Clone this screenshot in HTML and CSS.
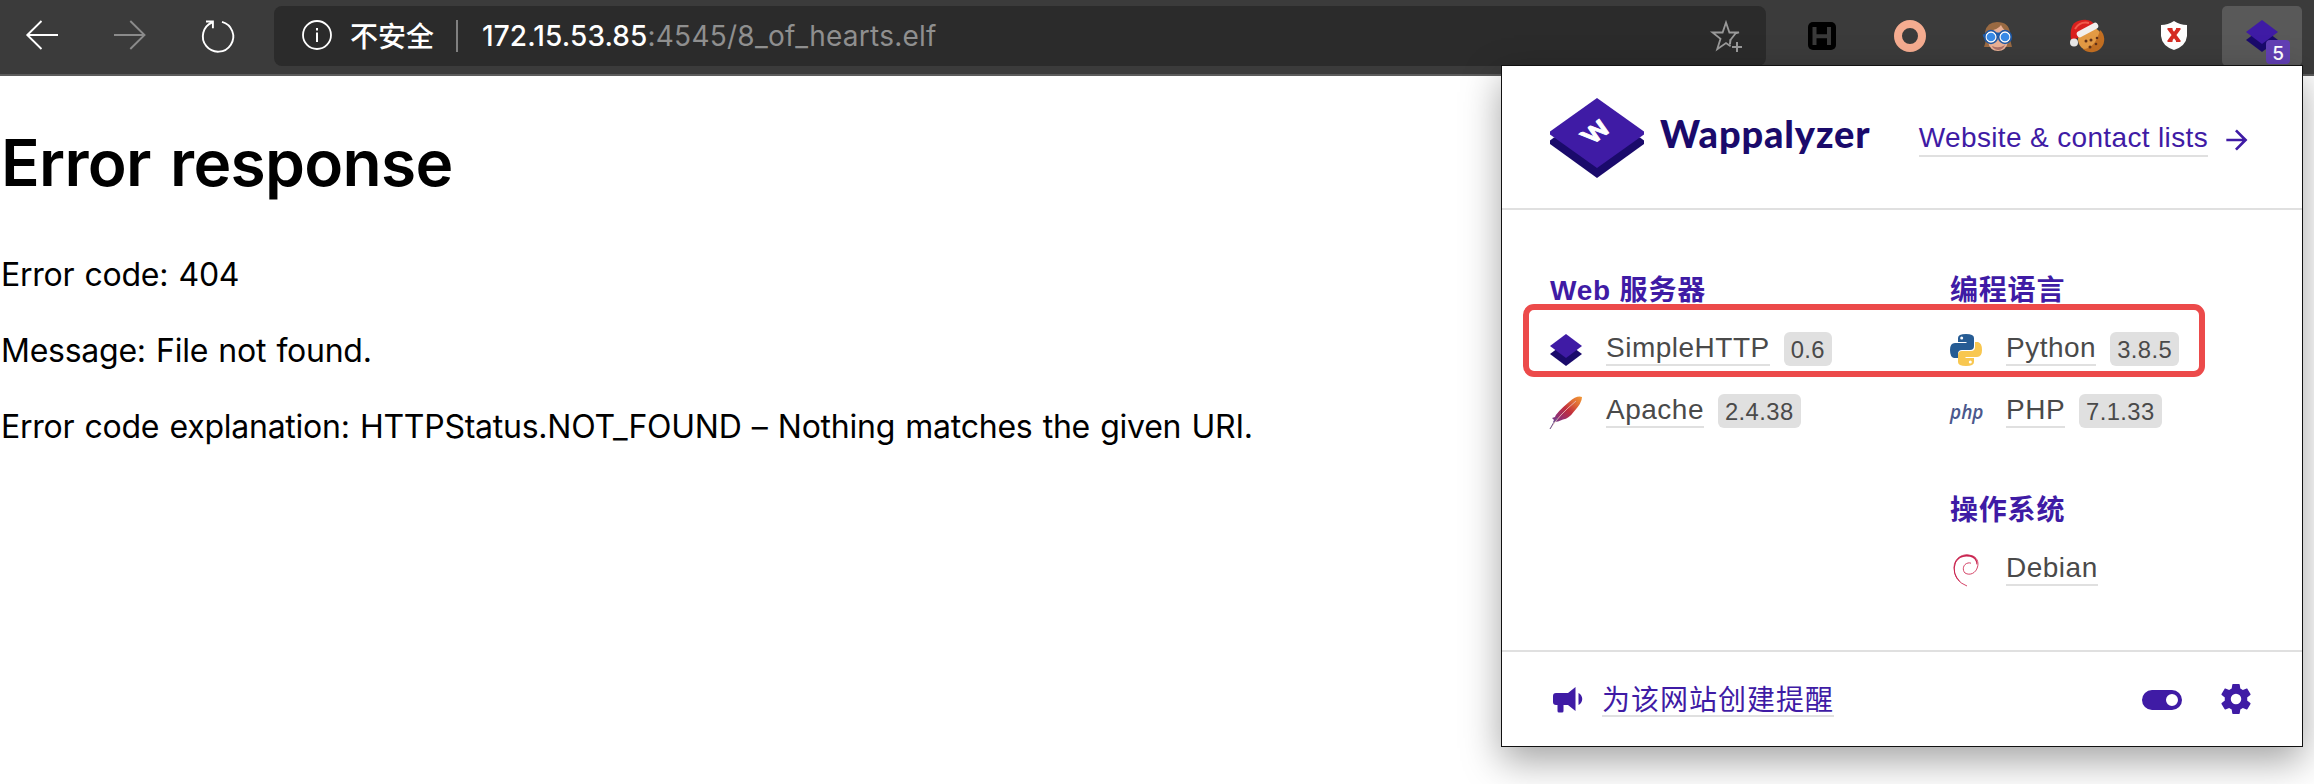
FILE: index.html
```html
<!DOCTYPE html>
<html lang="zh-CN">
<head>
<meta charset="utf-8">
<title>Error response</title>
<link rel="stylesheet" href="styles.css">
</head>
<body>
<header class="toolbar">
  <nav class="nav">
    <svg class="icon" viewBox="0 0 32 32"><path d="M32 15H1.5M15.5 1L1.3 15l14.2 14" fill="none" stroke="#fff" stroke-width="1.9"/></svg>
    <svg class="icon" viewBox="0 0 32 32"><path d="M0 15h30.500M16.300 1l14.200 14-14.200 14" fill="none" stroke="#8b8b8b" stroke-width="1.900"/></svg>
    <svg class="icon" viewBox="0 0 32 32"><path d="M20 1.800A15.200 15.200 0 1 1 10.300 2.400M4 1.500h6.900v6.800" fill="none" stroke="#fff" stroke-width="1.900"/></svg>
  </nav>
  <div class="address">
    <svg class="info" viewBox="0 0 30 30"><circle cx="15" cy="15" r="14" fill="none" stroke="#fff" stroke-width="1.800"/><path d="M15 12.500V22M15 8v2.500" stroke="#fff" stroke-width="2"/></svg>
    <span class="insecure">不安全</span>
    <span class="divider"></span>
    <span class="url"><span class="host">172.15.53.85</span><span class="path">:4545/8_of_hearts.elf</span></span>
    <svg class="star" viewBox="0 0 32 32"><path d="M20 20.500L25.500 13.500 29 12.500H19.400L16 2.500 12.600 12.500H2.500L10.500 18.800 7.200 29.200 16 23l4.600 3.200" fill="none" stroke="#999" stroke-width="1.800"/><path d="M20.500 19.500l-.6 5M22 27h10M27 22v10" stroke="#999" stroke-width="2"/></svg>
  </div>
  <div class="extensions">
    <svg class="icon" viewBox="0 0 32 32"><rect x="2" y="2" width="28" height="28" rx="5"/><path d="M8.500 7v18M23 7v18M8.500 16.300H23" stroke="#3a3a3a" stroke-width="4"/></svg>
    <svg class="icon" viewBox="0 0 32 32"><circle cx="16" cy="16" r="12" fill="none" stroke="#f5ac90" stroke-width="8"/></svg>
    <svg class="icon" viewBox="0 0 32 32">
      <path d="M3 12Q5 2 15 2q12 0 13 11 0 8 2 14H2Q5 20 3 12" fill="#9a6a42"/>
      <path d="M6 11q10-1 13-6 2 5 7 7v10q-2 9-10 9T6 22z" fill="#eab095"/>
      <path d="M10 26q7 3 13-1-2 5-7 5-5-1-6-4" fill="#ad7168"/>
      <path d="M1 16q15-4 28 0" stroke="#1e5dac" stroke-width="3" fill="none"/>
      <g fill="#398ae6" stroke="#fff" stroke-width="1.300"><circle cx="9" cy="17" r="5"/><circle cx="23" cy="17" r="5"/></g>
      <g fill="none" stroke="#1d59a8" stroke-width="1.500"><circle cx="9" cy="17" r="6.400"/><circle cx="23" cy="17" r="6.400"/></g>
    </svg>
    <svg class="icon" viewBox="0 0 32 32">
      <circle cx="20" cy="19" r="12" fill="#e39a44"/><path d="M30 10a12 12 0 0 1-17 19q12 0 17-19" fill="#c36f22"/>
      <g fill="#61321b"><circle cx="16" cy="21" r="1.500"/><circle cx="21" cy="20" r="1.500"/><circle cx="27" cy="18" r="1.300"/><circle cx="20" cy="27" r="1.500"/><circle cx="26" cy="24" r="1.300"/></g>
      <path d="M1 20Q-1 4 8 1q13-4 17 5l-16 11-7 4z" fill="#d9201e"/><path d="M5 9Q10 1 19 3" stroke="#f15a4c" stroke-width="2" fill="none"/>
      <path d="M10 14l15-8" stroke="#f2efed" stroke-width="6.500" stroke-linecap="round"/><circle cx="4" cy="22.500" r="4" fill="#e8e8e8"/>
    </svg>
    <svg class="icon" viewBox="0 0 32 32"><path d="M16 1q6 4 13 4v11q-1 10-13 14Q4 26 3 16V5q7 0 13-4" fill="#fff"/><path d="M11.500 9l9 12M20.500 9l-9 12" stroke="#d52b22" stroke-width="3.800"/><path d="M9.500 9h5M18 9h4.500M9.500 21h5M18 21h4.500" stroke="#d52b22" stroke-width="2"/></svg>
    <div class="ext-active">
      <svg class="icon" viewBox="0 0 32 32"><path d="M0 20l16-12 16 12-16 12z" fill="#1a0a6b"/><path d="M0 12L16 0l16 12-16 12z" fill="#3f1ba5"/></svg>
      <span class="count">5</span>
    </div>
  </div>
</header>

<main class="page">
  <h1>Error response</h1>
  <p>Error code: 404</p>
  <p>Message: File not found.</p>
  <p>Error code explanation: HTTPStatus.NOT_FOUND – Nothing matches the given URI.</p>
</main>

<aside class="popup">
  <div class="popup-head">
    <svg class="logo" viewBox="0 0 94 80"><path d="M0 42.500L4 39.500h86l4 3v3.500L47 80 0 46z" fill="#1a0a6b"/><path d="M0 33.500L47 0l47 33.500v3L47 70 0 36.500z" fill="#3f1ba5"/><text class="logo-w" transform="matrix(.8 -.6 .8 .6 46 34)" y="8.500" text-anchor="middle" fill="#fff" stroke="#fff" stroke-width="1">W</text></svg>
    <span class="brand">Wappalyzer</span>
    <a class="lists">Website &amp; contact lists</a>
    <svg class="arrow" viewBox="0 0 24 24"><path d="M4,11V13H16L10.500,18.500L11.920,19.920L19.840,12L11.920,4.080L10.500,5.500L16,11H4Z"/></svg>
  </div>
  <div class="popup-body">
    <section class="col">
      <h2>Web 服务器</h2>
      <div class="tech"><svg class="icon" viewBox="0 0 32 32"><path d="M0 20l16-12 16 12-16 12z" fill="#1a0a6b"/><path d="M0 12L16 0l16 12-16 12z" fill="#3f1ba5"/></svg><a>SimpleHTTP</a><span class="ver">0.6</span></div>
      <div class="tech"><svg class="icon" viewBox="0 0 32 32">
        <defs><linearGradient id="feather" x1="1" y1="0" x2="0" y2="1"><stop offset="0" stop-color="#f39a35"/><stop offset=".25" stop-color="#df6b36"/><stop offset=".5" stop-color="#c22f3c"/><stop offset=".75" stop-color="#9a2f6b"/><stop offset="1" stop-color="#6b3a8f"/></linearGradient></defs>
        <path d="M32 1q-5-2-13 5Q6 17 5 21l-3 1 2 2-1 2 5-.5 5-2q6-1 11-8Q32 7 32 1z" fill="url(#feather)"/><path d="M0 33Q9 19 26 5" fill="none" stroke="#e9b8b4" stroke-width=".9"/><path d="M0 33q3-6 7-11" fill="none" stroke="#6f5a90" stroke-width="1"/></svg><a>Apache</a><span class="ver">2.4.38</span></div>
    </section>
    <section class="col">
      <h2>编程语言</h2>
      <div class="tech"><svg class="icon" viewBox="0 0 32 32"><path d="M16 0q-8 0-8 4v4h8.500v1H5Q0 9 0 16t4 8h4v-4q0-4 4-4h8q4 0 4-4V4q0-4-8-4z" fill="#265c94"/><circle cx="11.700" cy="4" r="1.500" fill="#fff"/><path d="M16 32q8 0 8-4v-4h-8.500v-1H27q5 0 5-7t-4-8h-3v5q0 4-4 4h-9q-4 0-4 4v7q0 4 8 4z" fill="#f8c750"/><circle cx="20.300" cy="28" r="1.500" fill="#fff"/></svg><a>Python</a><span class="ver">3.8.5</span></div>
      <div class="tech"><span class="php">php</span><a>PHP</a><span class="ver">7.1.33</span></div>
      <h2 class="second">操作系统</h2>
      <div class="tech"><svg class="icon" viewBox="0 0 32 32"><path d="M17 32Q4 27 4 14C4 3 14-1 21 1.500c6 1 8 7 6.500 11.500C26 19 20 22 15 19c-3-3-2-9 3-10q1-.4 3 .2" fill="none" stroke="#d54568" stroke-width="1"/><path d="M13 30Q3 24 3.800 13 5 2 16 .8q9-.5 11 6.200l.4 3-1 .5Q26 4 20 2.800 10 1 6 8.500 2 19 10.500 28z" fill="#c8234f"/></svg><a>Debian</a></div>
    </section>
  </div>
  <div class="popup-foot">
    <svg class="mdi" viewBox="0 0 24 24"><path d="M12,8H4A2,2 0 0,0 2,10V14A2,2 0 0,0 4,16H5V20A1,1 0 0,0 6,21H8A1,1 0 0,0 9,20V16H12L17,20V4L12,8M21.500,12C21.500,13.710 20.540,15.260 19,16V8C20.530,8.750 21.500,10.300 21.500,12Z"/></svg>
    <a class="alert">为该网站创建提醒</a>
    <svg class="mdi toggle" viewBox="0 0 24 24"><path d="M17,7H7A5,5 0 0,0 2,12A5,5 0 0,0 7,17H17A5,5 0 0,0 22,12A5,5 0 0,0 17,7M17,15A3,3 0 0,1 14,12A3,3 0 0,1 17,9A3,3 0 0,1 20,12A3,3 0 0,1 17,15Z"/></svg>
    <svg class="mdi cog" viewBox="0 0 24 24"><path d="M12,15.500A3.500,3.500 0 0,1 8.500,12A3.500,3.500 0 0,1 12,8.500A3.500,3.500 0 0,1 15.500,12A3.500,3.500 0 0,1 12,15.500M19.430,12.970C19.470,12.650 19.500,12.330 19.500,12C19.500,11.670 19.470,11.340 19.430,11L21.540,9.370C21.730,9.220 21.780,8.950 21.660,8.730L19.660,5.270C19.540,5.050 19.270,4.960 19.050,5.050L16.560,6.050C16.040,5.660 15.500,5.320 14.870,5.070L14.500,2.420C14.460,2.180 14.250,2 14,2H10C9.750,2 9.540,2.180 9.500,2.420L9.130,5.070C8.500,5.320 7.960,5.660 7.440,6.050L4.950,5.050C4.730,4.960 4.460,5.050 4.340,5.270L2.340,8.730C2.210,8.950 2.270,9.220 2.460,9.370L4.570,11C4.530,11.340 4.500,11.670 4.500,12C4.500,12.330 4.530,12.650 4.570,12.970L2.460,14.630C2.270,14.780 2.210,15.050 2.340,15.270L4.340,18.730C4.460,18.950 4.730,19.030 4.950,18.950L7.440,17.940C7.960,18.340 8.500,18.680 9.130,18.930L9.500,21.580C9.540,21.820 9.750,22 10,22H14C14.250,22 14.460,21.820 14.500,21.580L14.870,18.930C15.500,18.670 16.040,18.340 16.560,17.940L19.050,18.950C19.270,19.030 19.540,18.950 19.660,18.730L21.660,15.270C21.780,15.050 21.730,14.780 21.540,14.630L19.430,12.970Z"/></svg>
  </div>
  <div class="highlight"></div>
</aside>
</body>
</html>
```
FILE: styles.css
```css
* { box-sizing: border-box; }
body {
  margin: 0;
  height: 784px;
  overflow: hidden;
  position: relative;
  background: #fff;
  color: #000;
  font-family: "Liberation Sans", "Noto Sans CJK SC", sans-serif;
}
svg { display: block; flex: none; overflow: visible; }
.icon { width: 32px; height: 32px; }

.toolbar {
  display: flex;
  align-items: flex-start;
  height: 76px;
  padding: 6px 0 0 26px;
  background: #3b3b3b;
  border-bottom: 2px solid #5c5c5c;
}
.nav { display: flex; gap: 56px; padding-top: 14px; }
.address {
  display: flex;
  align-items: center;
  width: 1492px;
  height: 60px;
  margin-left: 40px;
  padding: 0 24px 0 28px;
  border-radius: 8px;
  background: #2b2b2b;
  font-family: Inter, "Noto Sans CJK SC", sans-serif;
  font-size: 28px;
}
.info { width: 30px; height: 30px; margin-top: -2px; }
.insecure { margin: -2px 0 0 18px; width: 84px; color: #fff; font-weight: 500; font-family: "Noto Sans CJK SC", sans-serif; line-height: 40px; }
.divider { width: 2px; height: 32px; margin-left: 22px; background: #808080; }
.url { margin-left: 24px; line-height: 40px; white-space: nowrap; letter-spacing: .25px; }
.host { color: #fff; font-weight: 500; letter-spacing: .1px; }
.path { color: #8f8f8f; }
.star { width: 32px; height: 32px; margin-left: auto; }
.extensions { display: flex; gap: 56px; padding-top: 14px; margin-left: 40px; }
.ext-active {
  position: relative;
  width: 80px;
  height: 60px;
  margin: -14px 0 0 -24px;
  padding: 14px 24px;
  border-radius: 5px;
  background: #595959;
}
.count {
  position: absolute;
  left: 44px;
  top: 34px;
  width: 24px;
  height: 24px;
  border-radius: 4px;
  background: #623fb4;
  color: #fff;
  font: 500 19px/27px Inter, sans-serif;
  text-align: center;
}

.page { padding: 50px 0 0 1px; font-family: Inter, sans-serif; }
h1 { margin: 0 0 55px; font-size: 64px; font-weight: 600; line-height: 74px; letter-spacing: -.7px; word-spacing: 4px; }
.page p { margin: 0 0 36px; font-size: 32px; line-height: 40px; letter-spacing: -.25px; word-spacing: 1.5px; }

.popup {
  position: absolute;
  left: 1501px;
  top: 65px;
  width: 802px;
  height: 682px;
  display: flex;
  flex-direction: column;
  border: 1px solid #111;
  background: #fff;
  color: #4a4a4a;
  font-size: 28px;
  letter-spacing: .5px;
  box-shadow: 0 14px 36px rgba(0, 0, 0, .36);
}
.popup-head {
  display: flex;
  align-items: center;
  height: 144px;
  padding: 0 49px 0 48px;
  border-bottom: 2px solid #e0e0e0;
}
.logo { width: 94px; height: 80px; margin-top: 2px; }
.logo-w { font: 900 24px Lato, sans-serif; letter-spacing: 0; }
.brand { margin: -8px 0 0 16px; color: #1a0a6b; font: 900 38px/48px Lato, sans-serif; letter-spacing: .85px; }
.lists, .tech a, .alert { border-bottom: 2px solid #e0e0e0; white-space: nowrap; }
.lists { margin-left: auto; margin-top: 4px; line-height: 34px; color: #3f1ba5; letter-spacing: .35px; }
.arrow { width: 32px; height: 32px; margin-left: 13px; margin-top: 6px; fill: #3f1ba5; }

.popup-body { flex: 1; display: grid; grid-template-columns: 400px 1fr; padding: 61px 0 0 48px; }
h2 { margin: 0 0 8px; font-size: 28px; line-height: 40px; color: #3f1ba5; letter-spacing: .8px; }
h2.second { margin-top: 48px; }
.tech { display: flex; align-items: center; height: 62px; }
.tech a { margin-left: 24px; line-height: 32px; margin-bottom: 2px; }
.ver {
  height: 34px;
  margin: 0 0 2px 14px;
  padding: 0 7px;
  border-radius: 6px;
  background: #e0e0e0;
  font-size: 23.8px;
  line-height: 36px;
  letter-spacing: .4px;
}
.php { width: 32px; color: #4b588c; font: italic 600 19px/24px "Open Sans", sans-serif; letter-spacing: 0; }

.popup-foot {
  display: flex;
  align-items: center;
  height: 96px;
  padding: 0 48px;
  border-top: 2px solid #e0e0e0;
}
.mdi { width: 36px; height: 36px; fill: #3f1ba5; }
.alert { margin: 6px 0 0 16px; line-height: 28px; color: #3f1ba5; letter-spacing: 1px; }
.toggle { width: 48px; height: 48px; margin-left: auto; margin-top: 2px; }
.cog { margin-left: 32px; }

.highlight {
  position: absolute;
  left: 21px;
  top: 238px;
  width: 682px;
  height: 73px;
  border: 6px solid #ec4a4a;
  border-radius: 11px;
}
```
